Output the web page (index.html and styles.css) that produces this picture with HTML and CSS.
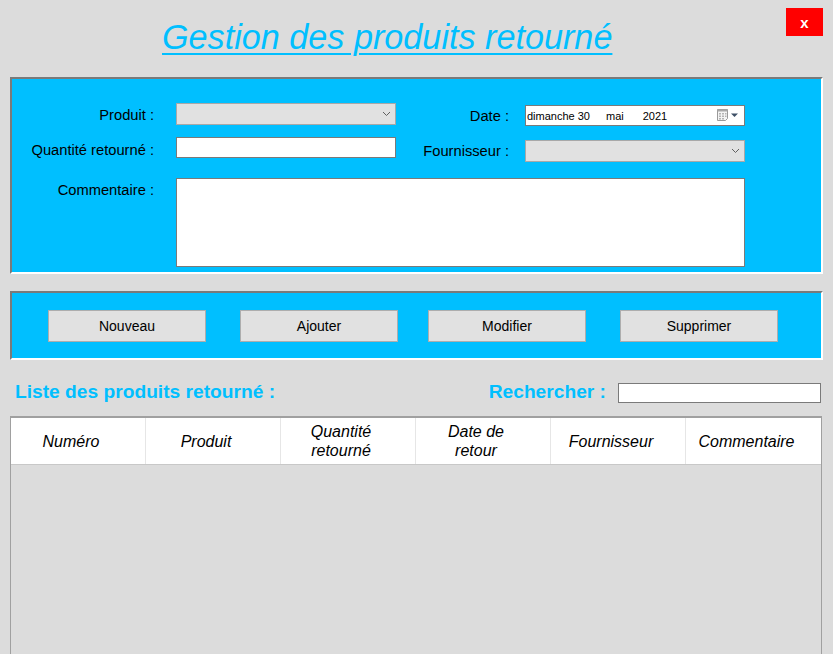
FILE: index.html
```html
<!DOCTYPE html>
<html lang="fr">
<head>
<meta charset="utf-8">
<title>Gestion des produits retourné</title>
<link rel="stylesheet" href="styles.css">
</head>
<body>
<div class="topbar">
  <h1 class="title">Gestion des produits retourné</h1>
  <div class="close">x</div>
</div>

<section class="panel form-panel">
  <div class="form">
    <div class="lbl l1">Produit :</div>
    <div class="combo c1"><svg width="9" height="6" viewBox="0 0 9 6"><polyline points="1,1 4.5,4.5 8,1" fill="none" stroke="#606060" stroke-width="1"/></svg></div>
    <div class="lbl r l1d">Date :</div>
    <div class="date">
      <span class="d1">dimanche 30</span><span class="d2">mai</span><span class="d3">2021</span>
      <span class="cal">
        <svg width="22" height="13" viewBox="0 0 22 13">
          <path d="M0.5 0.5 H10.5 V9.5 L8.5 11.5 H0.5 Z" fill="#f4f4f4" stroke="#9a9a9a"/>
          <rect x="0.5" y="0.5" width="10" height="2" fill="#a8a8a8"/>
          <g fill="#b4b4b4">
            <rect x="2" y="4" width="2" height="1.5"/><rect x="5" y="4" width="2" height="1.5"/><rect x="8" y="4" width="1.5" height="1.5"/>
            <rect x="2" y="6.5" width="2" height="1.5"/><rect x="5" y="6.5" width="2" height="1.5"/><rect x="8" y="6.5" width="1.5" height="1.5"/>
            <rect x="2" y="9" width="2" height="1.5"/><rect x="5" y="9" width="2" height="1.5"/>
          </g>
          <polygon points="14,4.5 21,4.5 17.5,8" fill="#3d4f66"/>
        </svg>
      </span>
    </div>

    <div class="lbl l2">Quantité retourné :</div>
    <div class="text t2"></div>
    <div class="lbl r l2d">Fournisseur :</div>
    <div class="combo c2"><svg width="9" height="6" viewBox="0 0 9 6"><polyline points="1,1 4.5,4.5 8,1" fill="none" stroke="#606060" stroke-width="1"/></svg></div>

    <div class="lbl l3">Commentaire :</div>
    <div class="memo"></div>
  </div>
</section>

<section class="panel btn-panel">
  <div class="btn">Nouveau</div>
  <div class="btn">Ajouter</div>
  <div class="btn b3">Modifier</div>
  <div class="btn">Supprimer</div>
</section>

<div class="listbar">
  <div class="listtitle">Liste des produits retourné :</div>
  <div class="searchlbl">Rechercher :</div>
  <div class="search"></div>
</div>

<div class="grid">
  <div class="ghead">
    <div class="gc">Numéro</div>
    <div class="gc">Produit</div>
    <div class="gc">Quantité<br>retourné</div>
    <div class="gc">Date de<br>retour</div>
    <div class="gc">Fournisseur</div>
    <div class="gc">Commentaire</div>
  </div>
</div>
</body>
</html>
```

FILE: styles.css
```css
body {
  margin: 0;
  width: 833px;
  height: 654px;
  overflow: hidden;
  background: #dcdcdc;
  font-family: "Liberation Sans", Arial, sans-serif;
  color: #000;
}

.topbar {
  height: 77px;
  display: flex;
  align-items: flex-start;
}

.title {
  margin: 17px 0 0 162px;
  font-size: 34.2px;
  line-height: 40px;
  font-style: italic;
  font-weight: normal;
  color: #00bfff;
  text-decoration: underline;
  text-decoration-thickness: 2px;
  text-underline-offset: 4px;
}

.close {
  margin: 8px 10px 0 auto;
  width: 37px;
  height: 28px;
  background: #ff0000;
  color: #fff;
  font-weight: bold;
  font-size: 15px;
  display: flex;
  align-items: center;
  justify-content: center;
}

.panel {
  margin: 0 10px;
  background: #00bfff;
  border: 2px solid;
  border-color: #7a7a7a #ffffff #ffffff #7a7a7a;
}

.form {
  padding: 24px 0 5px;
  display: grid;
  grid-template-columns: 164px 220px 129px 220px;
  grid-template-rows: 34px 41px 89px;
}

.lbl {
  text-align: right;
  padding-right: 22px;
  font-size: 14.7px;
  line-height: 22px;
  align-self: start;
}
.lbl.r { padding-right: 16px; }
.l1 { margin-top: 1px; }
.l1d { margin-top: 2px; }
.l2 { margin-top: 2px; }
.l2d { margin-top: 3px; }
.l3 { margin-top: 1px; }

.combo {
  height: 22px;
  box-sizing: border-box;
  border: 1px solid #a8a8a8;
  background: #e1e1e1;
  display: flex;
  justify-content: flex-end;
  align-items: center;
  padding-right: 4px;
  align-self: start;
}
.c2 { margin-top: 3px; }

.text {
  height: 21px;
  box-sizing: border-box;
  border: 1px solid #7a7a7a;
  background: #fff;
  align-self: start;
}

.date {
  margin-top: 2px;
  height: 21px;
  box-sizing: border-box;
  border: 1px solid #7a7a7a;
  background: #fff;
  align-self: start;
  display: flex;
  align-items: center;
  font-size: 11px;
  padding-left: 1px;
}
.d2 { margin-left: 16px; }
.d3 { margin-left: 19px; }
.cal { margin-left: auto; margin-right: 5px; display: flex; }

.memo {
  grid-column: 2 / span 3;
  height: 89px;
  box-sizing: border-box;
  border: 1px solid #7a7a7a;
  background: #fff;
}

.btn-panel {
  margin-top: 17px;
  padding: 17px 0 0 36px;
  height: 48px;
  display: flex;
  gap: 34px;
  align-items: flex-start;
}

.btn {
  width: 158px;
  height: 32px;
  box-sizing: border-box;
  border: 1px solid #adadad;
  background: #e1e1e1;
  font-size: 14px;
  display: flex;
  align-items: center;
  justify-content: center;
}
.b3 { margin-left: -4px; }

.listbar {
  margin-top: 23px;
  height: 20px;
  display: flex;
  align-items: center;
  padding: 0 12px 0 15px;
}

.listtitle, .searchlbl {
  font-size: 19.2px;
  font-weight: bold;
  color: #00bfff;
  margin-top: -3px;
}
.searchlbl { margin-left: auto; margin-right: 12px; }

.search {
  width: 203px;
  height: 20px;
  box-sizing: border-box;
  border: 1px solid #7a7a7a;
  background: #fff;
}

.grid {
  margin: 13px 11px 0 10px;
  height: 236px;
  border: 1px solid #a0a0a0;
  border-top: 2px solid #a0a0a0;
  border-bottom: none;
}

.ghead {
  display: grid;
  grid-template-columns: repeat(6, 135px);
  height: 46px;
  background: #fff;
  border-bottom: 1px solid #c8c8c8;
}

.gc {
  display: flex;
  align-items: center;
  justify-content: center;
  text-align: center;
  font-style: italic;
  font-size: 16px;
  line-height: 19px;
  padding-right: 14px;
  border-right: 1px solid #e6e6e6;
}
.gc:last-child { border-right: none; }
```
